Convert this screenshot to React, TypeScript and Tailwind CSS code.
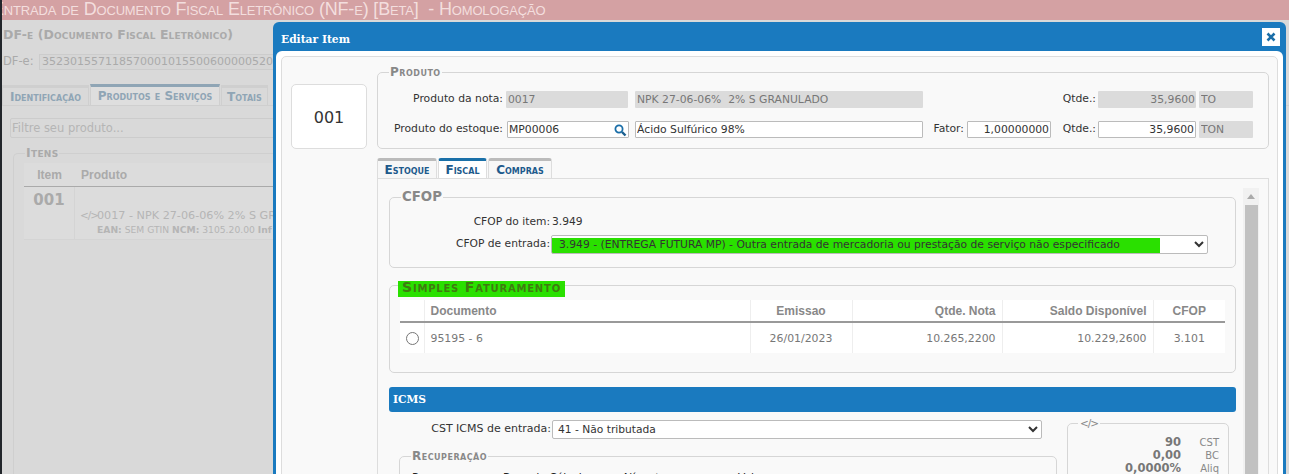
import type { ReactNode } from "react"

const legendClass = "font-bold text-[12px] tracking-[0.5px] text-[#888] [font-variant:small-caps] ml-[11px] px-[1px]"
const inputClass = "h-[17px] border border-[#bbb] bg-white text-[#333] text-[10.8px] px-[1px] rounded-[1px] outline-none"
const grayClass = "h-[17px] bg-[#dbdbdb] text-[#777] text-[10.8px] px-[2px] rounded-[1px] outline-none"
const bgTabClass = "h-[20px] flex items-center justify-center font-bold text-[12px] text-[#8fa5b5] [font-variant:small-caps] border-x border-t-[3px] border-[#cfcfcf]"

function Tab({ label, active, width }: { label: string; active?: boolean; width: string }) {
  return (
    <div
      className={`${width} h-[20px] flex items-center justify-center rounded-t-[3px] border-x border-[#ddd] border-t-[3px] font-bold text-[12px] text-[#1d5a8c] [font-variant:small-caps] ${
        active ? "bg-white border-t-[#1a70a8]" : "bg-[#f7f7f7] border-t-[#bbb]"
      }`}
    >
      {label}
    </div>
  )
}

function Field({ label, className, children }: { label: string; className: string; children: ReactNode }) {
  return (
    <fieldset className={`border border-[#d6d6d6] rounded-[5px] ${className}`}>
      <legend className={legendClass}>{label}</legend>
      {children}
    </fieldset>
  )
}

function Background() {
  return (
    <div className="w-[1289px] h-[474px] bg-[#d9d9d9] text-[#aaa] overflow-hidden border-l-2 border-l-[#22262b]">
      <div className="h-[20px] bg-[#d4a1a3] text-[#f3dede] text-[18px] tracking-[-0.17px] leading-[19px] whitespace-nowrap [font-variant:small-caps] font-['Liberation_Sans',sans-serif] -ml-[10px]">
        Entrada de Documento Fiscal Eletrônico (NF-e) [Beta] &nbsp;- Homologação
      </div>
      <div className="mt-[7px] pl-[1px] font-bold text-[12.5px] tracking-[0.1px] text-[#aaa] [font-variant:small-caps] leading-[16px]">
        DF-e (Documento Fiscal Eletrônico)
      </div>
      <div className="mt-[11px] flex items-center h-[16px] text-[11.5px] pl-[1px]">
        <span className="w-[36px]">DF-e:</span>
        <div className="w-[240px] h-[16px] bg-[#d6d6d6] border border-[#ccc] px-[2px] text-[11px] leading-[14px] whitespace-nowrap overflow-hidden text-[#aaa]">
          35230155711857000101550060000052010
        </div>
      </div>
      <div className="mt-[14px] flex gap-[1px] items-end">
        <div className={`${bgTabClass} w-[87px]`}>Identificação</div>
        <div className={`${bgTabClass} w-[130px] h-[21px] border-t-[#8fa5b5] bg-[#dedede]`}>Produtos e Serviços</div>
        <div className={`${bgTabClass} w-[47px]`}>Totais</div>
      </div>
      <div className="h-px bg-[#cfcfcf]" />
      <div className="mt-[12px] ml-[8px] h-[20px] w-[300px] border border-[#ccc] rounded-[2px] px-[1px] text-[11.5px] leading-[18px] text-[#b5b5b5]">
        Filtre seu produto...
      </div>
      <div className="mt-[15px] ml-[11px] w-[300px] h-[340px] border-l border-t border-[#cfcfcf] rounded-tl-[5px] relative">
        <div className="absolute -top-[8px] left-[11px] bg-[#d9d9d9] px-[1px] font-bold text-[#aaa] text-[12.5px] tracking-[0.3px] leading-[14px] [font-variant:small-caps]">Itens</div>
        <div className="ml-[10px] mt-[9px]">
          <div className="flex h-[24px] items-center border-b border-[#aaa] font-['Liberation_Sans',sans-serif] font-bold text-[12px] text-[#aaa] bg-[#dcdcdc]">
            <span className="w-[51px] shrink-0 text-center">Item</span>
            <span className="pl-[6px]">Produto</span>
          </div>
          <div className="flex h-[53px] bg-[#dcdcdc] border-b border-[#d4d4d4]">
            <div className="w-[51px] shrink-0 text-center font-bold text-[15px] leading-[26px] text-[#aaa] border-r border-[#d4d4d4]">001</div>
            <div className="pl-[5px] pt-[21px] whitespace-nowrap">
              <div className="text-[11.2px] leading-[15px] text-[#b5b5b5] flex">
                <span className="w-[17px] text-[10.5px] tracking-[-1px]">&lt;/&gt;</span>
                0017 - NPK 27-06-06% 2% S GRANULADO
              </div>
              <div className="pl-[17px] text-[9.2px] leading-[14px] text-[#b5b5b5]"><b>EAN:</b> SEM GTIN <b>NCM:</b> 3105.20.00 <b>Inf</b></div>
            </div>
          </div>
        </div>
      </div>
    </div>
  )
}

function ProdutoBox() {
  return (
    <Field label="Produto" className="w-[892px] h-[86px] text-[10.8px]">
      <div className="flex items-center mt-[10px] h-[17px] text-[#333]">
        <span className="w-[128px] shrink-0 text-right pr-[3px]">Produto da nota:</span>
        <input readOnly className={`${grayClass} w-[122px]`} defaultValue="0017" />
        <input readOnly className={`${grayClass} w-[288px] ml-[7px]`} defaultValue="NPK 27-06-06%  2% S GRANULADO" />
        <span className="w-[175px] shrink-0 text-right pr-[2px]">Qtde.:</span>
        <input readOnly className={`${grayClass} w-[98px] text-right !pr-[1px]`} defaultValue="35,9600" />
        <input readOnly className={`${grayClass} w-[54px] ml-[3px]`} defaultValue="TO" />
      </div>
      <div className="flex items-center mt-[13px] h-[17px] text-[#333]">
        <span className="w-[129px] shrink-0 text-right pr-[4px] whitespace-nowrap">Produto do estoque:</span>
        <div className={`${inputClass} w-[122px] relative leading-[15px]`}>
          MP00006
          <svg className="absolute right-[1px] top-[2px]" width="13" height="13" viewBox="0 0 13 13" fill="none">
            <circle cx="5" cy="5" r="3.6" stroke="#1a6ea8" strokeWidth="1.8" />
            <path d="M8 8 11.5 11.5" stroke="#1a5f8f" strokeWidth="2.4" />
          </svg>
        </div>
        <input readOnly className={`${inputClass} w-[288px] ml-[6px]`} defaultValue="Ácido Sulfúrico 98%" />
        <span className="w-[44px] shrink-0 text-right pr-[3px]">Fator:</span>
        <input readOnly className={`${inputClass} w-[84px] text-right`} defaultValue="1,00000000" />
        <span className="w-[47px] shrink-0 text-right pr-[2px]">Qtde.:</span>
        <input readOnly className={`${inputClass} w-[98px] text-right`} defaultValue="35,9600" />
        <input readOnly className={`${grayClass} w-[54px] ml-[3px]`} defaultValue="TON" />
      </div>
    </Field>
  )
}

function SimplesTable() {
  const th = "font-['Liberation_Sans',sans-serif] font-bold text-[12px] text-[#888] border-r border-[#eee] px-[6px] h-[22px]"
  const td = "text-[10.9px] text-[#777] border-r border-[#eee] px-[6px] pt-[3px] h-[31px]"
  return (
    <table className="ml-[10px] mt-[7px] w-[825px] table-fixed bg-white border-collapse">
      <thead>
        <tr className="border-b-2 border-[#999]">
          <th className={`${th} w-[24px]`} />
          <th className={`${th} w-[326px] text-left`}>Documento</th>
          <th className={`${th} w-[102px] text-center`}>Emissao</th>
          <th className={`${th} w-[150px] text-right`}>Qtde. Nota</th>
          <th className={`${th} w-[151px] text-right`}>Saldo Disponível</th>
          <th className={`${th} w-[72px] text-center border-r-0`}>CFOP</th>
        </tr>
      </thead>
      <tbody>
        <tr>
          <td className={`${td} px-[5px] !pt-[1px]`}><input type="radio" readOnly className="block w-[13px] h-[13px] m-0" /></td>
          <td className={td}>95195 - 6</td>
          <td className={`${td} text-center`}>26/01/2023</td>
          <td className={`${td} text-right`}>10.265,2200</td>
          <td className={`${td} text-right`}>10.229,2600</td>
          <td className={`${td} text-center border-r-0`}>3.101</td>
        </tr>
      </tbody>
    </table>
  )
}

function FiscalTab() {
  return (
    <div className="w-[847px] shrink-0 text-[10.7px] text-[#333]">
      <fieldset className="border border-[#d6d6d6] rounded-[5px] h-[80px]">
        <legend className="font-bold text-[13.3px] leading-[18px] text-[#888] ml-[11px] px-[1px]">CFOP</legend>
        <div className="flex items-center h-[15px] mt-[9px]">
          <span className="w-[162px] shrink-0 text-right pr-[2px]">CFOP do item:</span>
          <span>3.949</span>
        </div>
        <div className="flex items-center mt-[5px]">
          <span className="w-[161px] shrink-0 text-right pr-[1px]">CFOP de entrada:</span>
          <select className="w-[657px] h-[19px] border border-[#bbb] text-[10.75px] text-[#333] pl-[3px] rounded-[2px] bg-white bg-[linear-gradient(#2ae000,#2ae000)] bg-no-repeat bg-[length:608px_16px] bg-[position:0_2px]">
            <option>3.949 - (ENTREGA FUTURA MP) - Outra entrada de mercadoria ou prestação de serviço não especificado</option>
          </select>
        </div>
      </fieldset>
      <fieldset className="border border-[#d6d6d6] rounded-[5px] h-[96px] mt-[9px]">
        <legend className="relative top-[4px] font-bold text-[14px] tracking-[0.8px] leading-[12px] pb-[4px] text-[#3f7a10] bg-[#2ae000] ml-[8px] px-[4px] [font-variant:small-caps]">Simples Faturamento</legend>
        <SimplesTable />
      </fieldset>
      <div className="mt-[14px] h-[25px] bg-[#1a7abf] rounded-[3px] px-[4px] pt-[2px] flex items-center font-['DejaVu_Serif',serif] font-bold text-[10.7px] text-white">ICMS</div>
      <div className="flex mt-[2px]">
        <div className="w-[678px] shrink-0">
          <div className="flex items-center mt-[6px]">
            <span className="w-[163px] shrink-0 text-right pr-[1px] text-[11px] whitespace-nowrap">CST ICMS de entrada:</span>
            <select className="w-[490px] h-[19px] border border-[#bbb] text-[10.7px] text-[#333] pl-[1px] rounded-[2px] bg-white">
              <option>41 - Não tributada</option>
            </select>
          </div>
          <Field label="Recuperação" className="ml-[10px] mt-[8px] w-[658px] h-[60px]">
            <div className="flex mt-[5px] text-[#222] text-[10.7px] whitespace-nowrap">
              <span className="w-[103px] pl-[12px]">Recuperar</span>
              <span className="w-[119px]">Base de Cálculo</span>
              <span className="w-[116px]">Alíquota</span>
              <span>Valor</span>
            </div>
          </Field>
        </div>
        <fieldset className="w-[162px] h-[70px] border border-[#d6d6d6] rounded-[5px] text-[#888] mt-[2px]">
          <legend className="ml-[10px] px-[2px] text-[10.5px] tracking-[-1px] leading-[14px]">&lt;/&gt;</legend>
          <div className="mt-[6px] text-[11.5px] leading-[13px]">
            {[["90", "CST"], ["0,00", "BC"], ["0,0000%", "Aliq"]].map(([value, name]) => (
              <div key={name} className="flex justify-end pr-[9px]">
                <b className="text-[#777]">{value}</b>
                <span className="w-[38px] text-right text-[10px] text-[#888]">{name}</span>
              </div>
            ))}
          </div>
        </fieldset>
      </div>
    </div>
  )
}

function Modal() {
  return (
    <div className="absolute left-[273px] top-[22px] w-[1013px] h-[470px] bg-[#1a7abf] rounded-t-[6px] px-[3px] overflow-hidden">
      <div className="h-[29px] flex items-center justify-between pl-[5px] pr-[3px]">
        <span className="font-['DejaVu_Serif',serif] font-bold text-[10.7px] pt-[8px] text-white">Editar Item</span>
        <button className="w-[18px] h-[18px] bg-white flex items-center justify-center">
          <svg width="10" height="10" viewBox="0 0 10 10">
            <path d="M1.5 1.5 8.5 8.5M8.5 1.5 1.5 8.5" stroke="#1a6ea8" strokeWidth="2.6" />
          </svg>
        </button>
      </div>
      <div className="bg-white h-[440px] rounded-t-[6px] pt-[5px] px-[5px]">
        <div className="h-[430px] border border-[#ddd] rounded-[5px] bg-[#f9f9f9] pl-[9px] pr-[8px] pt-[6px] flex gap-[10px]">
          <div className="w-[76px] h-[65px] mt-[21px] shrink-0 bg-white border border-[#ddd] rounded-[5px] flex items-center justify-center pt-[2px] text-[16px] text-[#333]">001</div>
          <div className="w-[892px] shrink-0">
            <ProdutoBox />
            <div className="flex gap-[1px] mt-[9px] items-end">
              <Tab label="Estoque" width="w-[60px]" />
              <Tab label="Fiscal" active width="w-[49px]" />
              <Tab label="Compras" width="w-[64px]" />
            </div>
            <div className="h-[300px] border border-[#ddd] bg-[#f9f9f9] pl-[11px] pt-[9px] flex">
              <FiscalTab />
              <div className="ml-[7px] w-[16px] h-[300px] bg-[#f1f1f1] flex flex-col items-center">
                <svg className="mt-[6px]" width="8" height="5" viewBox="0 0 8 5"><path d="M4 0 8 5H0Z" fill="#aaa" /></svg>
                <div className="mt-[6px] w-[13px] flex-1 bg-[#c1c1c1]" />
              </div>
            </div>
          </div>
        </div>
      </div>
    </div>
  )
}

export default function App() {
  return (
    <div className="relative w-[1289px] h-[474px] overflow-hidden font-['DejaVu_Sans',sans-serif]">
      <Background />
      <Modal />
    </div>
  )
}
